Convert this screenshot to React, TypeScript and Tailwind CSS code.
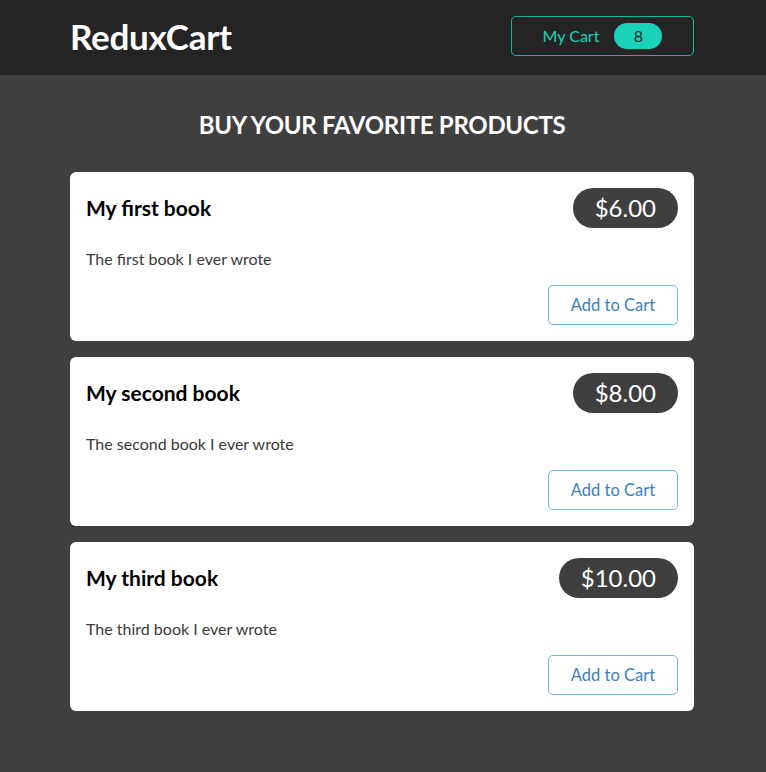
import React from "react";

const products = [
  { title: "My first book", price: "$6.00", desc: "The first book I ever wrote" },
  { title: "My second book", price: "$8.00", desc: "The second book I ever wrote" },
  { title: "My third book", price: "$10.00", desc: "The third book I ever wrote" },
];

export default function App() {
  return (
    <div className="min-h-[772px] bg-[#3f3f3f]" style={{ fontFamily: "Lato, 'Noto Sans', sans-serif" }}>
      <header className="h-[75px] bg-[#252424]">
        <div className="ml-[70px] flex h-full w-[624px] items-center justify-between pb-[3px]">
          <h1 className="text-[35px] font-bold tracking-[-0.3px] text-white">ReduxCart</h1>
          <button className="flex h-10 w-[183px] items-center justify-center gap-[15px] rounded-[5px] border border-[#1ab59f] text-[16px] text-[#1ad1b9]">
            <span>My Cart</span>
            <span className="flex h-[26px] w-12 items-center justify-center rounded-full bg-[#1ad1b9] text-[16px] text-[#252424]">8</span>
          </button>
        </div>
      </header>
      <main className="ml-[70px] w-[624px] pt-[35px]">
        <h2 className="h-[30px] text-center text-[24px] font-bold leading-[30px] tracking-[-0.3px] text-white">BUY YOUR FAVORITE PRODUCTS</h2>
        <ul className="mt-8 flex flex-col gap-4">
          {products.map((p) => (
            <li key={p.title} className="rounded-[6px] bg-white p-4">
              <div className="flex h-10 items-center justify-between">
                <h3 className="text-[21px] font-bold text-[#000]">{p.title}</h3>
                <span className="flex h-10 items-center rounded-full bg-[#3f3f3f] px-[22px] text-[24px] text-white">{p.price}</span>
              </div>
              <p className="mt-[19px] text-[16px] leading-6 text-[#3a3a3a]">{p.desc}</p>
              <div className="mt-[14px] flex justify-end">
                <button className="h-10 w-[130px] rounded-[5px] border border-[#6fb8e0] text-[16.5px] text-[#3a7fc1]">Add to Cart</button>
              </div>
            </li>
          ))}
        </ul>
      </main>
    </div>
  );
}
